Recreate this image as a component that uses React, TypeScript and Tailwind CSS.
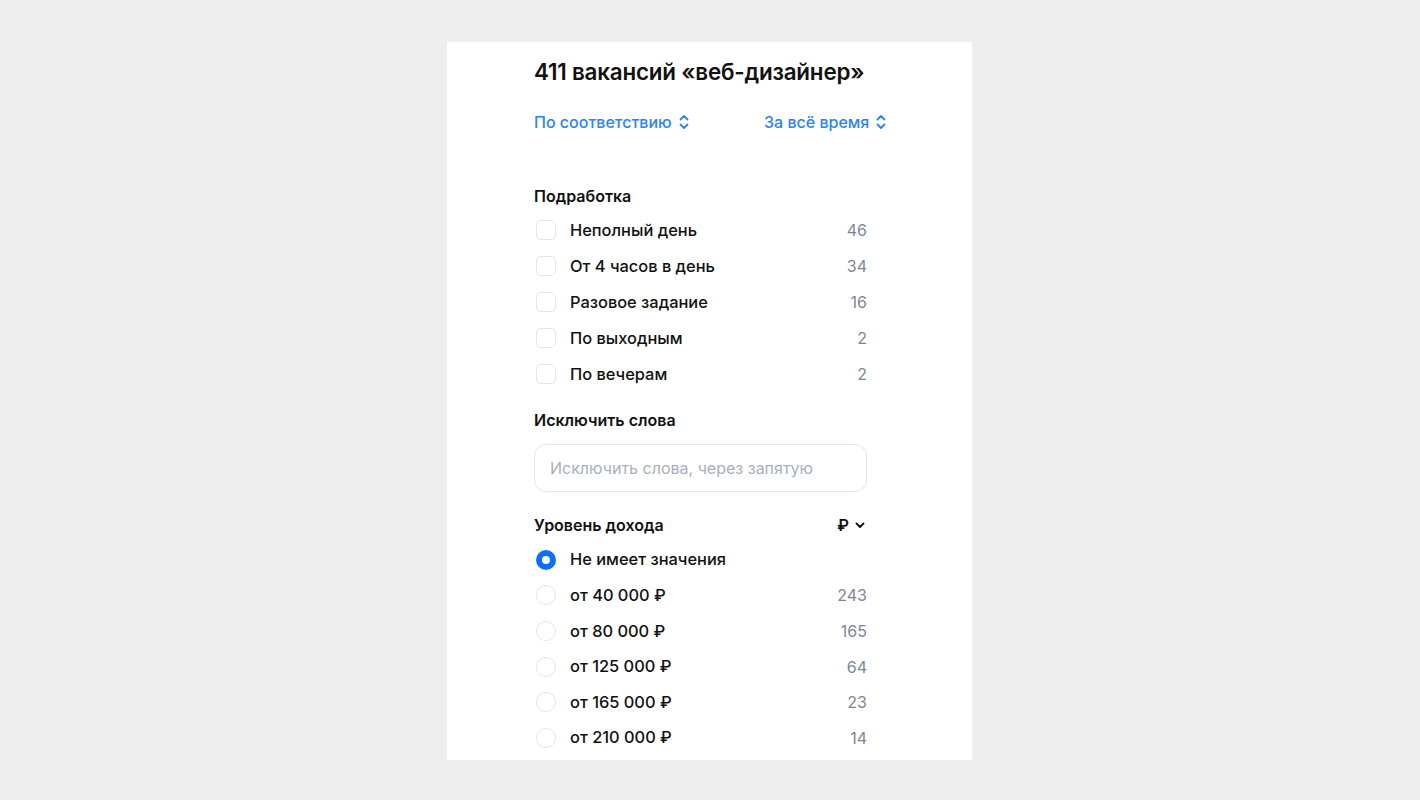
import React from "react";

const Updown = () => (
  <svg width="12" height="16" viewBox="0 0 12 16" fill="none" stroke="currentColor" strokeWidth="1.8" strokeLinecap="round" strokeLinejoin="round">
    <path d="M2.5 5.5 6 2l3.5 3.5" />
    <path d="M2.5 10.5 6 14l3.5-3.5" />
  </svg>
);

const Check = ({ label, count }: { label: string; count: string }) => (
  <div className="flex items-center h-[36px]">
    <div className="w-[20px] h-[20px] ml-[2px] rounded-[5px] border border-[#e3e6ea] bg-white" />
    <span className="ml-[14px] text-[16.4px] text-[#111] font-medium flex-1">{label}</span>
    <span className="text-[16px] text-[#7c8695]">{count}</span>
  </div>
);

const Radio = ({ label, count, checked }: { label: string; count?: string; checked?: boolean }) => (
  <div className="flex items-center h-[35.6px]">
    {checked ? (
      <div className="w-[20px] h-[20px] ml-[2px] rounded-full border-[6px] border-[#0f6ef5] bg-white" />
    ) : (
      <div className="w-[20px] h-[20px] ml-[2px] rounded-full border border-[#e3e6ea] bg-white" />
    )}
    <span className="ml-[14px] text-[16.4px] text-[#111] font-medium flex-1">{label}</span>
    {count && <span className="text-[16px] text-[#7c8695]">{count}</span>}
  </div>
);

export default function App() {
  return (
    <div className="min-h-[800px] bg-[#eeeeee] pt-[42px] pl-[447px]" style={{ fontFamily: "Inter, 'Noto Sans', sans-serif" }}>
      <div className="w-[525px] h-[718px] bg-white pl-[87px] overflow-hidden">
        <div className="w-[333px]">
          <h1 className="pt-[14px] text-[22.4px] leading-[32px] font-semibold text-[#111] tracking-[-0.2px] whitespace-nowrap">411 вакансий «веб-дизайнер»</h1>
          <div className="mt-[22px] h-[24px] flex items-center text-[16px] text-[#2b83f6] font-medium whitespace-nowrap">
            <span className="w-[230px] shrink-0 flex items-center gap-[6px]">По соответствию <Updown /></span>
            <span className="shrink-0 flex items-center gap-[6px]">За всё время <Updown /></span>
          </div>
          <div className="mt-[50px] text-[16px] font-semibold text-[#111] leading-[24px]">Подработка</div>
          <div className="mt-[4px]">
            <Check label="Неполный день" count="46" />
            <Check label="От 4 часов в день" count="34" />
            <Check label="Разовое задание" count="16" />
            <Check label="По выходным" count="2" />
            <Check label="По вечерам" count="2" />
          </div>
          <div className="mt-[16px] text-[16px] font-semibold text-[#111] leading-[24px]">Исключить слова</div>
          <div className="mt-[12px] h-[48px] rounded-[12px] border border-[#e3e6ea] flex items-center px-[15px] text-[16px] text-[#a7b0bc]">
            Исключить слова, через запятую
          </div>
          <div className="mt-[21px] flex items-center justify-between text-[16px] font-semibold text-[#111] leading-[24px]">
            <span>Уровень дохода</span>
            <span className="flex items-center gap-[6px] mr-[2px]">
              ₽
              <svg width="10" height="8" viewBox="0 0 10 8" fill="none" stroke="currentColor" strokeWidth="1.8" strokeLinecap="round" strokeLinejoin="round"><path d="M1.5 2.5 5 6l3.5-3.5" /></svg>
            </span>
          </div>
          <div className="mt-[5px]">
            <Radio label="Не имеет значения" checked />
            <Radio label="от 40 000 ₽" count="243" />
            <Radio label="от 80 000 ₽" count="165" />
            <Radio label="от 125 000 ₽" count="64" />
            <Radio label="от 165 000 ₽" count="23" />
            <Radio label="от 210 000 ₽" count="14" />
          </div>
        </div>
      </div>
    </div>
  );
}
